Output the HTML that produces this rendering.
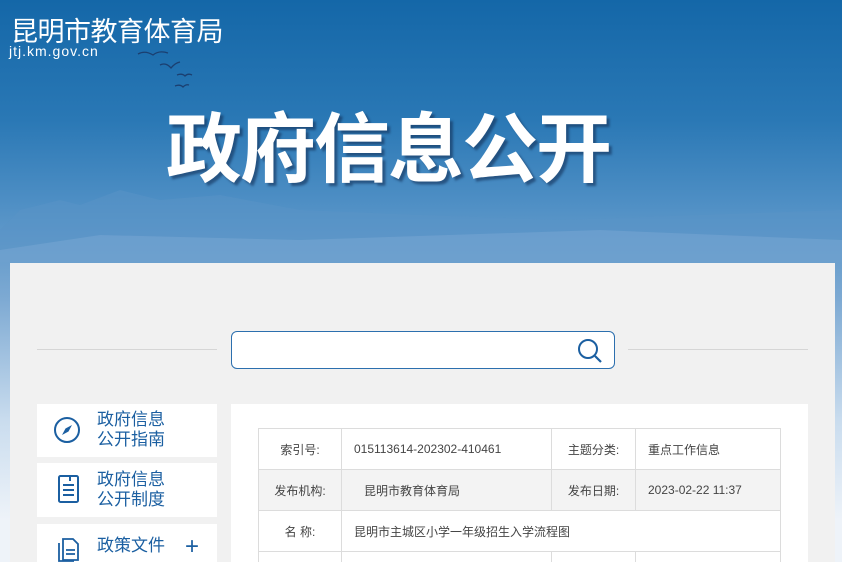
<!DOCTYPE html>
<html><head><meta charset="utf-8"><style>
*{margin:0;padding:0;box-sizing:border-box}
html,body{width:842px;height:562px;overflow:hidden}
html{background:#eef3f9}
body{font-family:"Liberation Sans","Noto Sans CJK SC",sans-serif}
#w{position:relative;width:842px;height:562px;overflow:hidden;
background:linear-gradient(180deg,#1467a8 0px,#2a78b5 120px,#4d8ec4 200px,#7eaad3 300px,#c9dcee 420px,#eef3f9 520px)}
.hill{position:absolute;left:0;top:170px;width:842px;height:92px}
.logo{position:absolute;left:11px;top:10px;color:#fff;font-size:27px;letter-spacing:-0.5px}
.url{position:absolute;left:9px;top:43px;color:#fff;font-size:14px;letter-spacing:1px}
.big{position:absolute;left:166px;top:88px;color:#fff;font-size:76px;font-weight:bold;letter-spacing:-2px;text-shadow:3px 3px 2px rgba(20,50,90,.6)}
.main{position:absolute;left:10px;top:263px;width:825px;height:299px;background:#f1f1f1}
.line{position:absolute;top:349px;height:1px;background:#d6d6d6}
.search{position:absolute;left:231px;top:331px;width:384px;height:38px;border:1px solid #2c6fae;border-radius:6px;background:#fff}
.menu{position:absolute;left:37px;width:180px;background:#fff;color:#1b5fa1;font-size:17px;line-height:20px;overflow:hidden}
.menu .t{position:absolute;left:60px}
.panel{position:absolute;left:231px;top:404px;width:577px;height:158px;background:#fff;overflow:hidden}
table{position:absolute;left:27px;top:24px;border-collapse:collapse;font-size:12px;color:#444}
td{border:1px solid #dcdcdc;height:41px;padding:0 12px}
</style></head><body><div id="w">
<svg class="hill" viewBox="0 0 842 92"><path d="M0 60 L20 40 L60 30 L80 35 L120 20 L160 30 L220 25 L300 40 L420 45 L560 50 L700 45 L842 40 L842 92 L0 92Z" fill="#5a93c6" opacity=".55"/><path d="M0 80 L100 65 L300 70 L600 60 L842 70 L842 92 L0 92Z" fill="#7aa8d3" opacity=".5"/></svg>
<svg style="position:absolute;left:135px;top:48px" width="60" height="45"><g fill="none" stroke="#1b3f70" stroke-width="1.3"><path d="M3 6 Q10 2 18 7 Q24 2 33 5"/><path d="M25 17 Q31 14 36 20 Q40 15 45 14"/><path d="M42 27 Q47 25 50 28 Q53 25 57 27"/><path d="M40 38 Q45 36 48 39 Q51 36 54 37"/></g></svg>
<div class="logo">昆明市教育体育局</div>
<div class="url">jtj.km.gov.cn</div>
<div class="big">政府信息公开</div>
<div class="main"></div>
<div class="line" style="left:37px;width:180px"></div>
<div class="line" style="left:628px;width:180px"></div>
<div class="search"><svg style="position:absolute;right:11px;top:6px" width="26" height="26"><circle cx="11" cy="11" r="9" fill="none" stroke="#1b5fa1" stroke-width="2"/><path d="M18 18 L24 24" stroke="#1b5fa1" stroke-width="2.2"/></svg></div>
<div class="menu" style="top:404px;height:53px"><svg style="position:absolute;left:16px;top:12px" width="28" height="28"><circle cx="14" cy="14" r="12" fill="none" stroke="#1b5fa1" stroke-width="2"/><path d="M19 9 L15.5 15.5 L9 19 L12.5 12.5Z" fill="#1b5fa1"/></svg><div class="t" style="top:6px">政府信息<br>公开指南</div></div>
<div class="menu" style="top:463px;height:54px"><svg style="position:absolute;left:20px;top:11px" width="24" height="30"><rect x="2" y="2" width="19" height="26" rx="1.5" fill="none" stroke="#1b5fa1" stroke-width="2"/><path d="M6 11H17M6 16H17M6 21H17M13 2V7" stroke="#1b5fa1" stroke-width="2"/></svg><div class="t" style="top:7px">政府信息<br>公开制度</div></div>
<div class="menu" style="top:524px;height:38px"><svg style="position:absolute;left:19px;top:11px" width="26" height="27"><path d="M7 4H17L22 9V25H7Z" fill="none" stroke="#1b5fa1" stroke-width="1.8"/><path d="M3 8V26H18" fill="none" stroke="#1b5fa1" stroke-width="1.8"/><path d="M10 15H19M10 19H19" stroke="#1b5fa1" stroke-width="1.8"/></svg><div class="t" style="top:12px">政策文件</div><div style="position:absolute;left:148px;top:10px;font-size:24px;line-height:26px;font-weight:300">+</div></div>
<div class="panel">
<table>
<tr><td style="width:83px;text-align:center">索引号:</td><td style="width:210px">015113614-202302-410461</td><td style="width:84px;text-align:center">主题分类:</td><td style="width:145px">重点工作信息</td></tr>
<tr style="background:#f3f3f3"><td style="text-align:center">发布机构:</td><td style="padding-left:22px">昆明市教育体育局</td><td style="text-align:center">发布日期:</td><td>2023-02-22 11:37</td></tr>
<tr><td style="text-align:center">名 称:</td><td colspan="3">昆明市主城区小学一年级招生入学流程图</td></tr>
<tr><td style="height:10px;border-bottom:0"></td><td style="height:10px;border-bottom:0"></td><td style="height:10px;border-bottom:0"></td><td style="height:10px;border-bottom:0"></td></tr>
</table></div>
</div></body></html>
